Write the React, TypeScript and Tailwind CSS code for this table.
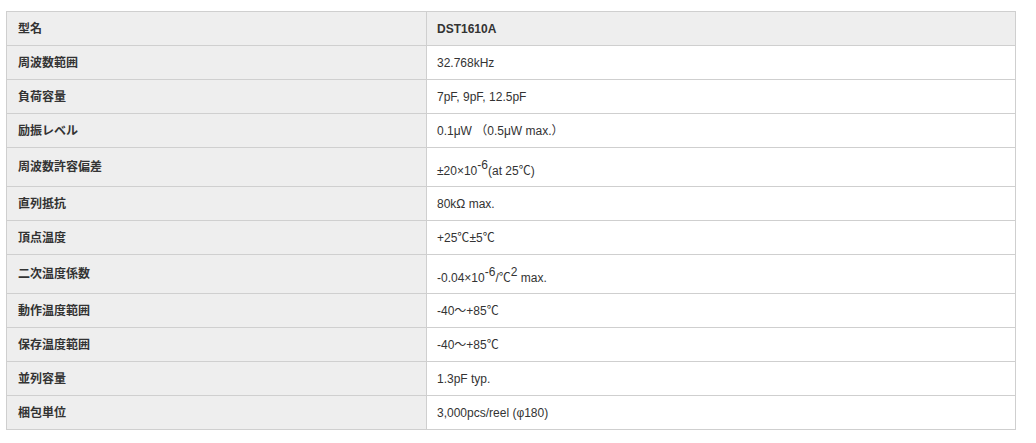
import React from "react";

const C = () => <span style={{ fontFamily: '"Noto Sans CJK JP", sans-serif' }}>℃</span>;

const rows: { label: string; value: React.ReactNode; tall?: boolean }[] = [
  { label: "周波数範囲", value: "32.768kHz" },
  { label: "負荷容量", value: "7pF, 9pF, 12.5pF" },
  { label: "励振レベル", value: "0.1μW （0.5μW max.）" },
  {
    label: "周波数許容偏差",
    value: (
      <>
        ±20×10<sup className="text-[12px]">-6</sup>(at 25<C />)
      </>
    ),
    tall: true,
  },
  { label: "直列抵抗", value: "80kΩ max." },
  { label: "頂点温度", value: <>+25<C />±5<C /></> },
  {
    label: "二次温度係数",
    value: (
      <>
        -0.04×10<sup className="text-[12px]">-6</sup>/<C /><sup className="text-[12px]">2</sup> max.
      </>
    ),
    tall: true,
  },
  { label: "動作温度範囲", value: <>-40～+85<C /></> },
  { label: "保存温度範囲", value: <>-40～+85<C /></> },
  { label: "並列容量", value: "1.3pF typ." },
  { label: "梱包単位", value: "3,000pcs/reel (φ180)" },
];

export default function App() {
  return (
    <div
      className="w-[1036px] h-[443px] bg-white pt-[11px] pl-[6px]"
      style={{ fontFamily: '"Liberation Sans", Arial, "Noto Sans CJK JP", sans-serif' }}
    >
      <table className="w-[1010px] border-collapse text-[12px] text-[#333] table-fixed">
        <colgroup>
          <col className="w-[420px]" />
          <col />
        </colgroup>
        <tbody>
          <tr className="h-[34px]">
            <td className="border border-[#cfcfcf] bg-[#eeeeee] px-[11px] py-0 font-bold align-middle">型名</td>
            <td className="border border-[#cfcfcf] bg-[#eeeeee] px-[10px] py-0 font-bold align-middle">DST1610A</td>
          </tr>
          {rows.map((r) => (
            <tr key={r.label} className={r.tall ? "h-[39px]" : "h-[34px]"}>
              <td className="border border-[#cfcfcf] bg-[#eeeeee] px-[11px] py-0 font-bold align-middle">{r.label}</td>
              <td
                className={
                  r.tall
                    ? "border border-[#cfcfcf] bg-white px-[10px] pt-[7px] pb-0 align-middle"
                    : "border border-[#cfcfcf] bg-white px-[10px] py-0 align-middle"
                }
              >
                {r.value}
              </td>
            </tr>
          ))}
        </tbody>
      </table>
    </div>
  );
}
